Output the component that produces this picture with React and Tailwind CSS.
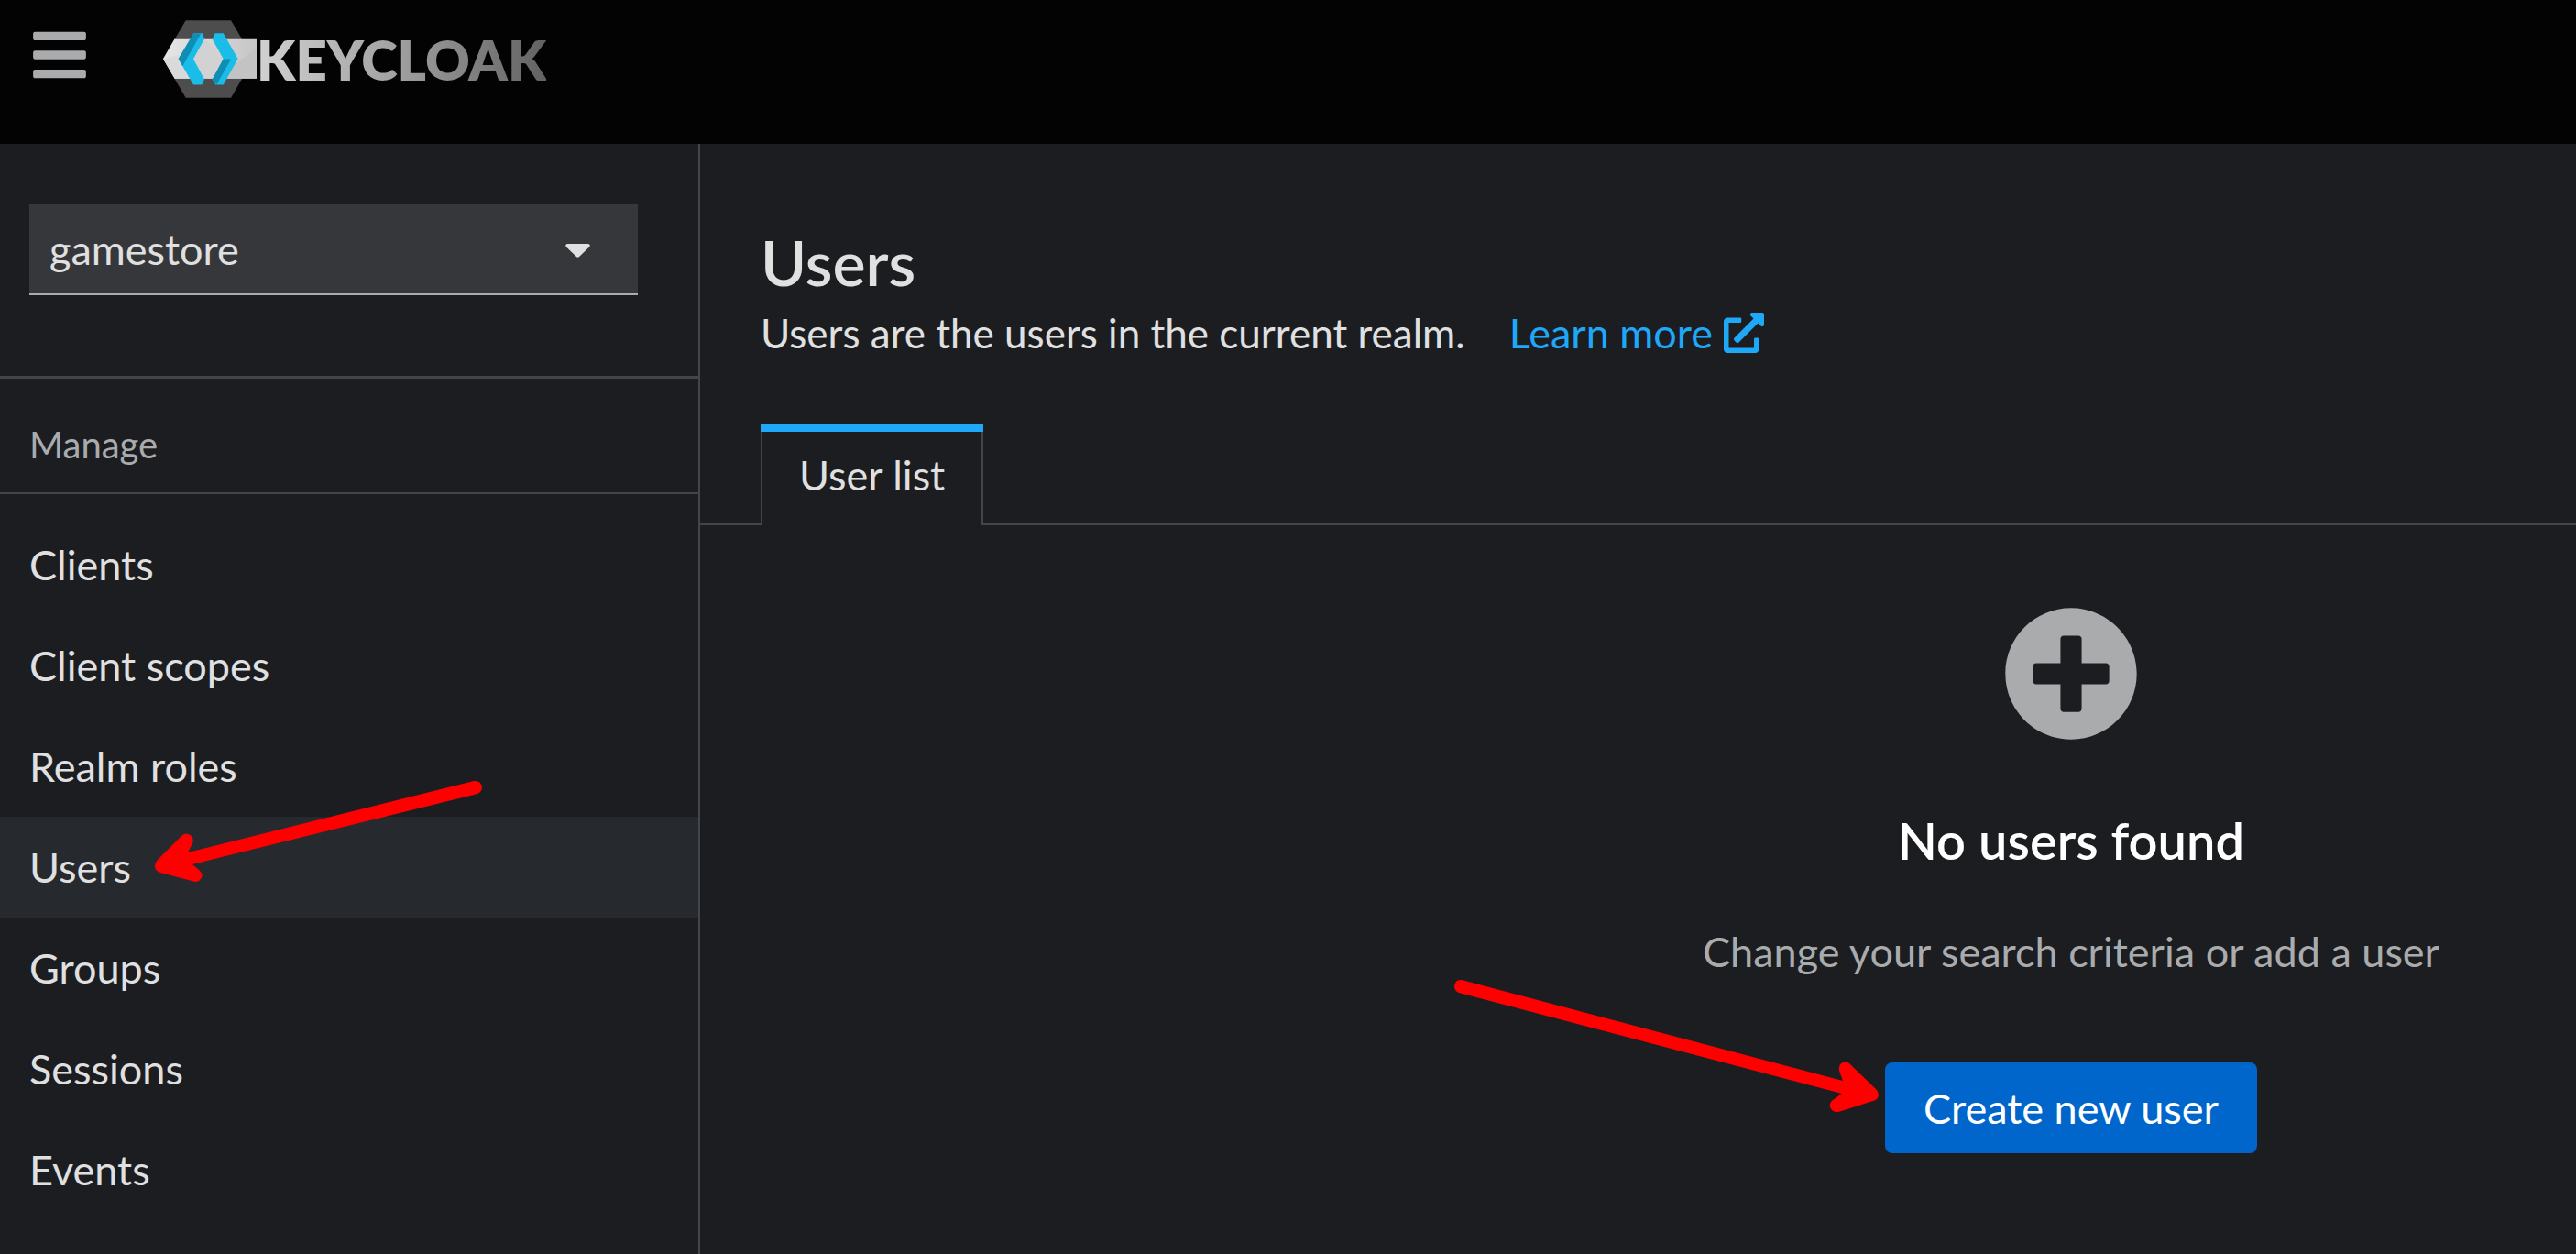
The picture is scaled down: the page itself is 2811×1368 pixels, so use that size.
import React from "react";
import { FaBars, FaExternalLinkAlt, FaPlusCircle } from "react-icons/fa";

const NAV_ITEMS = [
  "Clients",
  "Client scopes",
  "Realm roles",
  "Users",
  "Groups",
  "Sessions",
  "Events",
];

function KeycloakMark() {
  return (
    <svg viewBox="53 37 306 254" className="h-[85px] w-[102px]" aria-hidden="true">
      <defs>
        <linearGradient id="band" x1="0" x2="1">
          <stop offset="0" stopColor="#e6e6e6" />
          <stop offset="1" stopColor="#c6c6c6" />
        </linearGradient>
      </defs>
      <polygon points="127,37 275,37 349,163 275,291 127,291 53,163" fill="#4d4d4d" />
      <polygon points="90,99 359,99 359,228 91,228 53,163" fill="url(#band)" />
      <polygon points="53,163 112,150 150,228 91,228" fill="#dadada" />
      <polygon points="152,163 190,99 250,163 214,228 188,228" fill="#d2d2d2" />
      <polygon points="290,178 359,128 359,228 262,228" fill="#c3c3c3" />
      <polygon points="153,79 183,79 188,99 152,163 188,230 180,248 152,248 103,163" fill="#1abce8" />
      <polygon points="153,79 177,80 130,163 117,187 103,163" fill="#0f8db4" />
      <polygon points="223,79 250,79 298,163 250,248 225,248 214,230 250,163 214,99" fill="#1abce8" />
      <polygon points="250,164 275,164 228,248 214,230" fill="#0f8db4" />
    </svg>
  );
}

function Header() {
  return (
    <header className="flex min-h-[157px] items-start bg-[#030303] pl-8">
      <button type="button" aria-label="Global navigation" className="mt-[27px] text-[66px] text-[#aaabac]">
        <FaBars />
      </button>
      <a href="#home" aria-label="Keycloak" className="mt-[22px] ml-20 flex h-[85px] items-center">
        <KeycloakMark />
        <span className="bg-gradient-to-r from-[#d2d2d2] via-[#9f9f9f] to-[#626262] bg-clip-text text-[60px] leading-[80px] font-extrabold text-transparent">
          KEYCLOAK
        </span>
      </a>
    </header>
  );
}

function Sidebar() {
  return (
    <aside className="w-[764px] shrink-0 border-r-2 border-[#444548]">
      <div className="border-b-3 border-[#444548] pt-[66px] pr-[66px] pb-[88px] pl-8">
        <div className="relative">
          <select
            aria-label="Realm"
            defaultValue="gamestore"
            className="block h-[99px] w-full appearance-none border-b-2 border-[#aaabac] bg-[#36373a] px-[22px] pt-[3px]"
          >
            <option>gamestore</option>
          </select>
          <svg viewBox="0 0 27 15" className="pointer-events-none absolute top-[43px] right-[52px] h-[15px] w-[27px]" aria-hidden="true">
            <path d="M2 0H25Q28 1 26 3.500L15 14Q13.500 15.500 12 14L1 3.500Q-1 1 2 0Z" fill="#e0e0e0" />
          </svg>
        </div>
      </div>
      <nav aria-label="Manage">
        <h2 className="border-b-2 border-[#444548] pt-11 pb-6 pl-8 text-[40px] leading-[56px] text-[#aaabac]">Manage</h2>
        <ul className="pt-[22px]">
          {NAV_ITEMS.map((item) => (
            <li key={item}>
              <a
                href={"#" + item.toLowerCase().replace(" ", "-")}
                aria-current={item === "Users" ? "page" : undefined}
                className="block pl-8 leading-[110px] aria-[current=page]:bg-[#26292d]"
              >
                {item}
              </a>
            </li>
          ))}
        </ul>
      </nav>
    </aside>
  );
}

function Main() {
  return (
    <main className="min-w-0 flex-1 leading-[66px]">
      <section className="px-[66px] pt-[89px]">
        <h1 className="text-[68px] leading-[80px] font-semibold">Users</h1>
        <div className="mt-1 flex gap-12">
          <p className="text-[44px]">Users are the users in the current realm.</p>
          <a href="#learn-more" className="flex items-center gap-3 text-[#1fa7f8]">
            Learn more
            <FaExternalLinkAlt className="size-11" />
          </a>
        </div>
      </section>
      <div role="tablist" className="mt-[67px] flex">
        <div className="w-[66px] border-b-2 border-[#444548]" />
        <button type="button" role="tab" aria-selected="true" className="relative h-[110px] border-x-2 border-[#444548] px-10">
          <span className="absolute inset-x-[-2px] top-0 h-2 bg-[#1fa7f8]" />
          User list
        </button>
        <div className="flex-1 border-b-2 border-[#444548]" />
      </div>
      <section role="tabpanel" className="flex flex-col items-center pt-[88px] pl-[945px]">
        <FaPlusCircle className="size-[148px] text-[#aaabac]" />
        <h2 className="mt-[72px] text-[56px] leading-[72px] font-semibold text-white">No users found</h2>
        <p className="mt-[52px] text-[#aaabac]">Change your search criteria or add a user</p>
        <button type="button" className="mt-[88px] h-[99px] rounded-lg bg-[#0066cc] px-[42px] text-white">
          Create new user
        </button>
      </section>
    </main>
  );
}

function Arrows() {
  return (
    <>
      <svg viewBox="160 840 380 130" className="pointer-events-none absolute top-[840px] left-[160px] h-[130px] w-[380px]" aria-hidden="true">
        <path
          d="M169 945Q169 941 172 938L198 912Q203 907 209 912Q212 916 210 920L205 930L517 852Q524 851 526 858Q526 864 521 866L210 943L217 949Q222 953 220 957Q218 962 213 962L175 952Q169 950 169 945Z"
          fill="#ff0000"
        />
      </svg>
      <svg viewBox="1580 1060 480 160" className="pointer-events-none absolute top-[1060px] left-[1580px] h-[160px] w-[480px]" aria-hidden="true">
        <path
          d="M1587 1076Q1588 1068 1595 1069L2011 1179L2007 1168Q2006 1161 2011 1159Q2016 1157 2020 1162L2047 1188Q2050 1191 2050 1195Q2049 1200 2044 1201L2006 1213Q2000 1214 1997 1208Q1996 1203 2000 1200L2010 1193L1592 1083Q1587 1081 1587 1076Z"
          fill="#ff0000"
        />
      </svg>
    </>
  );
}

export default function App() {
  return (
    <div className="relative flex min-h-screen flex-col overflow-hidden bg-[#1b1d21] font-['Lato',sans-serif] text-[45px] text-[#e0e0e0]">
      <Header />
      <div className="flex flex-1">
        <Sidebar />
        <Main />
      </div>
      <Arrows />
    </div>
  );
}
